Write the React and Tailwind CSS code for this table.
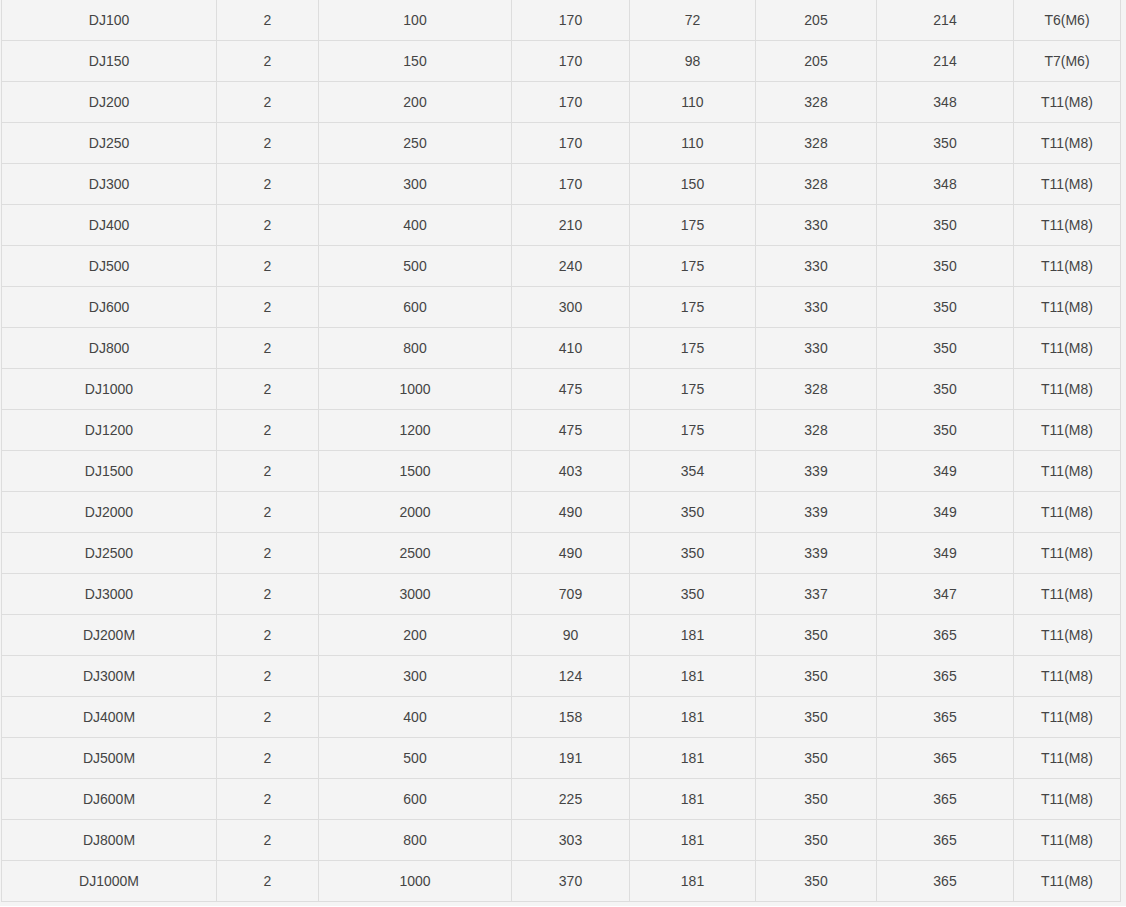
import React from 'react';

const rows = [
  ['DJ100', '2', '100', '170', '72', '205', '214', 'T6(M6)'],
  ['DJ150', '2', '150', '170', '98', '205', '214', 'T7(M6)'],
  ['DJ200', '2', '200', '170', '110', '328', '348', 'T11(M8)'],
  ['DJ250', '2', '250', '170', '110', '328', '350', 'T11(M8)'],
  ['DJ300', '2', '300', '170', '150', '328', '348', 'T11(M8)'],
  ['DJ400', '2', '400', '210', '175', '330', '350', 'T11(M8)'],
  ['DJ500', '2', '500', '240', '175', '330', '350', 'T11(M8)'],
  ['DJ600', '2', '600', '300', '175', '330', '350', 'T11(M8)'],
  ['DJ800', '2', '800', '410', '175', '330', '350', 'T11(M8)'],
  ['DJ1000', '2', '1000', '475', '175', '328', '350', 'T11(M8)'],
  ['DJ1200', '2', '1200', '475', '175', '328', '350', 'T11(M8)'],
  ['DJ1500', '2', '1500', '403', '354', '339', '349', 'T11(M8)'],
  ['DJ2000', '2', '2000', '490', '350', '339', '349', 'T11(M8)'],
  ['DJ2500', '2', '2500', '490', '350', '339', '349', 'T11(M8)'],
  ['DJ3000', '2', '3000', '709', '350', '337', '347', 'T11(M8)'],
  ['DJ200M', '2', '200', '90', '181', '350', '365', 'T11(M8)'],
  ['DJ300M', '2', '300', '124', '181', '350', '365', 'T11(M8)'],
  ['DJ400M', '2', '400', '158', '181', '350', '365', 'T11(M8)'],
  ['DJ500M', '2', '500', '191', '181', '350', '365', 'T11(M8)'],
  ['DJ600M', '2', '600', '225', '181', '350', '365', 'T11(M8)'],
  ['DJ800M', '2', '800', '303', '181', '350', '365', 'T11(M8)'],
  ['DJ1000M', '2', '1000', '370', '181', '350', '365', 'T11(M8)'],
];

const SpecTable = () => {
  return (
    <div className="w-full min-h-screen bg-[#f4f4f4] font-['Liberation_Sans',Arial,sans-serif] text-[14px] text-[#444]">
      {/* spec table, scrolled so the top border sits just above the fold */}
      <div className="ml-[1px] -mt-[1px] w-[1120px] grid grid-cols-[215px_102px_193px_118px_126px_121px_137px_107px] border-l border-t border-[#dddddd]">
        {rows.map((row, i) =>
          row.map((cell, j) => (
            <div
              key={`${i}-${j}`}
              className="h-[41px] flex items-center justify-center border-r border-b border-[#dddddd]"
            >
              {cell}
            </div>
          ))
        )}
      </div>
    </div>
  );
};

export default SpecTable;
